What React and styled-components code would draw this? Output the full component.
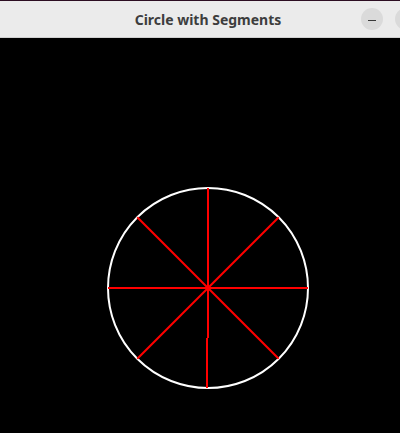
import styled, { createGlobalStyle } from "styled-components";

const Global = createGlobalStyle`
    html, body {
        margin: 0;
        padding: 0;
        background: #000;
        overflow: hidden;
    }
`

const Window = styled.div`
    width: 400px;
    height: 433px;
    display: flex;
    flex-direction: column;
    background: #000;
`

const TitleBar = styled.header`
    height: 36px;
    flex: none;
    border-top: 1px solid #2c0d22;
    background: #ebebeb;
    display: grid;
    grid-template-columns: 1fr auto 1fr;
    align-items: center;
    font-family: "Noto Sans", "DejaVu Sans", sans-serif;
`

const Title = styled.h1`
    grid-column: 2;
    margin: 0 0 0 16px;
    font-size: 14px;
    font-weight: bold;
    color: #3d3d3d;
`

const Controls = styled.div`
    grid-column: 3;
    justify-self: end;
    display: flex;
    gap: 12px;
    margin-right: -17px;
`

const RoundButton = styled.div`
    width: 22px;
    height: 22px;
    border-radius: 50%;
    background: #dadada;
    display: flex;
    align-items: center;
    justify-content: center;

    & > span {
        width: 8px;
        height: 1px;
        margin-top: 3px;
        background: #3a3a3a;
    }
`

const Separator = styled.div`
    height: 1px;
    flex: none;
    background: #d0d0d0;
`

const Canvas = styled.svg`
    display: block;
    flex: 1;
    width: 400px;
`

const cx = 208
const cy = 250
const r = 100

// the downward spoke is drawn apart, it has a one pixel step
const spokes = [0, 45, 90, 135, 180, 225, 315].map(a => {
    const rad = (a * Math.PI) / 180
    return [cx + r * Math.cos(rad), cy - r * Math.sin(rad)]
})

export default function App() {
    return (
        <>
            <Global />
            <Window>
                <TitleBar>
                    <Title>Circle with Segments</Title>
                    <Controls>
                        <RoundButton><span /></RoundButton>
                        <RoundButton />
                    </Controls>
                </TitleBar>
                <Separator />
                <Canvas viewBox="0 0 400 395">
                    <circle cx={cx} cy={cy} r={r} fill="none" stroke="#fff" strokeWidth="2" />
                    {spokes.map(([x, y], i) => (
                        <line key={i} x1={cx} y1={cy} x2={x} y2={y} stroke="#f00" strokeWidth="2" />
                    ))}
                    <line x1={cx} y1={cy} x2={cx} y2={300} stroke="#f00" strokeWidth="2" />
                    <line x1={cx - 1} y1={300} x2={cx - 1} y2={cy + r} stroke="#f00" strokeWidth="2" />
                </Canvas>
            </Window>
        </>
    )
}
